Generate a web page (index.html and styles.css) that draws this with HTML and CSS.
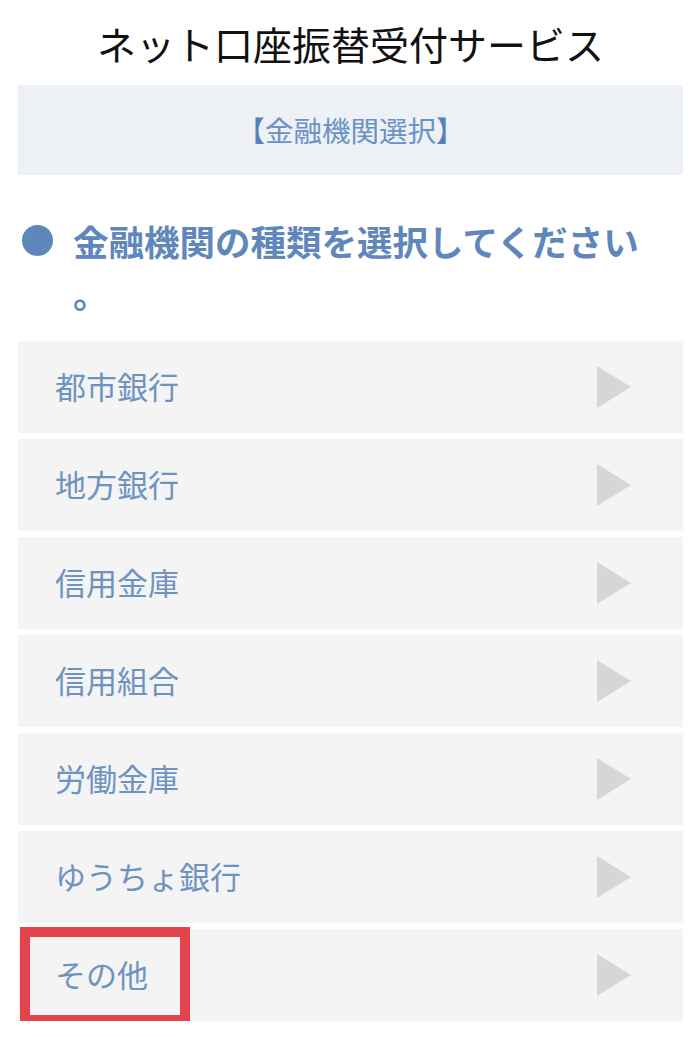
FILE: index.html
```html
<!DOCTYPE html>
<html lang="ja">
<head>
<meta charset="utf-8">
<title>ネット口座振替受付サービス</title>
<link rel="stylesheet" href="styles.css">
</head>
<body>
<div class="page">
  <h1 class="title">ネット口座振替受付サービス</h1>
  <div class="banner"><span class="bracket">【</span>金融機関選択<span class="bracket">】</span></div>
  <h2 class="heading"><span class="dot"></span><span class="heading-text">金融機関の種類を選択してください<br>。</span></h2>
  <ul class="list">
    <li class="item"><span class="label">都市銀行</span><span class="arrow"></span></li>
    <li class="item"><span class="label">地方銀行</span><span class="arrow"></span></li>
    <li class="item"><span class="label">信用金庫</span><span class="arrow"></span></li>
    <li class="item"><span class="label">信用組合</span><span class="arrow"></span></li>
    <li class="item"><span class="label">労働金庫</span><span class="arrow"></span></li>
    <li class="item"><span class="label">ゆうちょ銀行</span><span class="arrow"></span></li>
    <li class="item"><span class="label">その他</span><span class="arrow"></span><span class="highlight"></span></li>
  </ul>
</div>
</body>
</html>
```
FILE: styles.css
```css
* { box-sizing: border-box; }
html, body { margin: 0; padding: 0; background: #ffffff; }
body { font-family: "Noto Sans CJK JP", "Noto Sans", sans-serif; }
.page { padding: 0 17px 0 18px; }
.title {
  margin: 0 0 17px;
  padding-top: 18px;
  font-size: 39px;
  line-height: 50px;
  font-weight: 400;
  color: #111111;
  text-align: center;
}
.banner {
  height: 90px;
  background: #edf0f5;
  display: flex;
  align-items: center;
  justify-content: center;
  font-size: 28.5px;
  color: #6a93c5;
  padding-bottom: 2px;
}
.bracket { color: #5580b8; }
.heading {
  margin: 40px 0 22px;
  display: flex;
  align-items: flex-start;
  font-size: 35.5px;
  line-height: 52px;
  font-weight: 700;
  color: #5f87bb;
}
.dot {
  flex: none;
  width: 31px;
  height: 31px;
  border-radius: 50%;
  background: #5f87bb;
  margin: 10px 20px 0 4px;
}
.list {
  list-style: none;
  margin: 0;
  padding: 0;
  display: flex;
  flex-direction: column;
  gap: 6px;
}
.item {
  position: relative;
  height: 92px;
  background: #f4f4f4;
  display: flex;
  align-items: center;
  justify-content: space-between;
  padding: 0 52px 3px 37px;
}
.label {
  font-size: 31px;
  color: #6f93c0;
}
.arrow {
  width: 0;
  height: 0;
  margin-top: 3px;
  border-top: 21px solid transparent;
  border-bottom: 21px solid transparent;
  border-left: 34px solid #d6d6d6;
}
.highlight {
  position: absolute;
  left: 2px;
  top: -2px;
  width: 170px;
  height: 98px;
  border: 10px solid #e3434b;
}
```
